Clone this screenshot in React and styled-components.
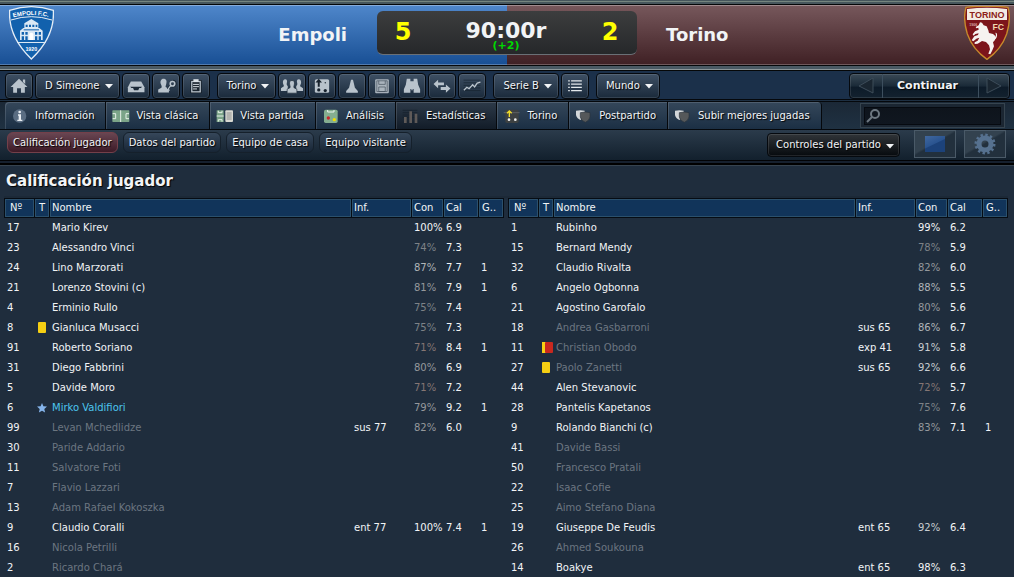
import React, { useState } from "react";
import styled, { createGlobalStyle, css } from "styled-components";

const GlobalStyle = createGlobalStyle`
    * {
        box-sizing: border-box;
    }
    body {
        margin: 0;
        background: #1f2d3d;
        color: #f2f4f6;
        font-family: "DejaVu Sans", sans-serif;
        font-size: 10px;
        line-height: 12px;
    }
    button,
    input {
        font: inherit;
        color: inherit;
        margin: 0;
    }
    svg {
        display: block;
    }
`;

const Page = styled.div`
    display: flex;
    flex-direction: column;
    height: 100vh;
    overflow: hidden;
`;

/* scoreboard */
const TopEdge = styled.div`
    flex: none;
    height: 5px;
    background: linear-gradient(#46565c 0 1px, #75857f 1px 2px, #46565c 2px 4px, #050708 4px);
`;
const Scoreboard = styled.header`
    flex: none;
    display: grid;
    grid-template-columns: 1fr 260px 1fr;
    height: 60px;
    background:
        linear-gradient(#ffffff50 0 1px, #ffffff00 1px 59px, #ffffff40 59px),
        linear-gradient(#4f87cb, #184f94) left / 50% 100% no-repeat,
        linear-gradient(#77585c, #3f2024) right / 50% 100% no-repeat;
`;
const Side = styled.div`
    display: flex;
    justify-content: space-between;
    padding: 1px 4px 0 9px;
    flex-direction: ${({ $away }) => ($away ? "row-reverse" : "row")};
`;
const TeamName = styled.h2`
    margin: 0;
    padding: ${({ $away }) => ($away ? "0 20px" : "0 26px")};
    font-size: 18px;
    line-height: 57px;
    font-weight: bold;
`;
const ScorePanel = styled.div`
    display: grid;
    grid-template-columns: 52px 1fr 54px;
    height: 44px;
    margin-top: 6px;
    border-radius: 6px;
    background: linear-gradient(#3c3d3e, #26282a);
    border-bottom: 1px solid #6a7076;
    text-align: center;
`;
const Goals = styled.strong`
    color: #ffff00;
    font-size: 24px;
    line-height: 42px;
`;
const Clock = styled.div`
    padding-top: 8px;
    font-size: 22px;
    line-height: 24px;
    font-weight: bold;
`;
const AddedTime = styled.div`
    margin-top: -2px;
    font-size: 11px;
    line-height: 10px;
    font-weight: bold;
    color: #00d800;
`;
const BottomEdge = styled.div`
    flex: none;
    height: 6px;
    background: linear-gradient(#07090b 0 1px, #4a5963 1px 4px, #8b9598 4px 5px, #050708 5px);
`;

/* main toolbar */
const Toolbar = styled.nav`
    flex: none;
    display: flex;
    align-items: center;
    gap: 2px;
    height: 28px;
    padding: 1px 4px 0 5px;
    background: #1b304a;
`;
const glossy = css`
    border: 1px solid #05090e;
    border-radius: 4px;
    background: linear-gradient(#3e5064, #1a2a3b);
    box-shadow: inset 0 0 0 1px #ffffff1c;
    text-shadow: 1px 1px 1px #000;
    padding: 0;
    height: 26px;
`;
const IconButton = styled.button`
    ${glossy}
    width: 28px;
    display: grid;
    place-items: center;
`;
const MenuButton = styled.button`
    ${glossy}
    display: flex;
    align-items: center;
    gap: 5px;
    padding: 0 6px 0 9px;
    margin-left: ${({ $spaced }) => ($spaced ? "5px" : "0")};
    svg {
        margin-top: 2px;
    }
`;
const Continue = styled.div`
    ${glossy}
    display: grid;
    grid-template-columns: 32px 96px 31px;
    margin-left: auto;
    background: linear-gradient(#3a4956, #1a2a38 50%, #0d1b29 55%, #13222f);
    button {
        display: grid;
        place-items: center;
        padding: 0;
        border: 0;
        background: none;
        text-shadow: inherit;
    }
    button + button {
        border-left: 1px solid #3d4f5e;
    }
`;
const ContinueLabel = styled.span`
    padding-right: 6px;
    font-size: 11px;
    font-weight: bold;
`;
const Rule = styled.div`
    flex: none;
    height: 3px;
    background: linear-gradient(#05080c 0 1px, #1d2f42 1px 2px, #05080c 2px);
`;

/* tabs */
const TabBar = styled.div`
    flex: none;
    display: flex;
    height: 28px;
    padding: 0 9px 0 5px;
    background: linear-gradient(#1b2836, #1f3142);
    border-bottom: 1px solid #05080c;
`;
const Tab = styled.button`
    display: flex;
    align-items: center;
    height: 27px;
    padding: 0 11px 0 0;
    border: 0;
    border-right: 1px solid #05080c;
    background: ${({ $active }) =>
        $active ? "linear-gradient(#2d3a49, #121c28)" : "linear-gradient(#35475a, #1b2f44)"};
    box-shadow: inset 1px 1px 0 #ffffff22;
    text-shadow: 1px 1px 1px #000;
    &:first-child {
        border-top-left-radius: 4px;
    }
    &:last-of-type {
        border-top-right-radius: 4px;
    }
    svg {
        width: 30px;
        height: 18px;
    }
`;
const Search = styled.label`
    display: flex;
    align-items: center;
    width: 145px;
    height: 25px;
    margin: 1px 0 0 auto;
    padding: 0 3px;
    border: 1px solid #36444f;
    background: #1b2632;
    position: relative;
    svg {
        position: absolute;
        left: 5px;
    }
    input {
        width: 100%;
        height: 18px;
        padding: 0 4px 0 20px;
        border: 1px solid #060a10;
        background: linear-gradient(#0e141c, #101720);
        outline: none;
    }
`;

/* sub views */
const SubBar = styled.div`
    flex: none;
    display: flex;
    align-items: flex-start;
    gap: 5px;
    height: 30px;
    padding: 0 8px 0 7px;
    background: linear-gradient(#2b3b4b, #12202d);
`;
const Pill = styled.button`
    height: 21px;
    margin-top: 2px;
    padding: 0 5px;
    border: 1px solid #15202b;
    border-radius: 6px;
    background: linear-gradient(#36475a, #182636);
    text-shadow: 1px 1px 1px #000;
    ${({ $active }) =>
        $active &&
        css`
            border-color: #74404a;
            background: linear-gradient(#694652, #3d1a27);
        `}
`;
const MatchControls = styled(MenuButton)`
    height: 24px;
    margin: 3px 9px 0 auto;
    padding: 0 5px 0 8px;
    background: linear-gradient(#303438, #060a0e);
`;
const ViewButton = styled.button`
    display: grid;
    place-items: center;
    width: 42px;
    height: 28px;
    margin-right: 3px;
    padding: 0;
    border: 1px solid #4a5a68;
    background: linear-gradient(150deg, #33424f 45%, #22303d 50%);
    &:last-child {
        margin-right: 0;
    }
`;
const PageEdge = styled.div`
    flex: none;
    height: 6px;
    background: linear-gradient(#020305 0 1px, #16202e 1px 3px, #000 3px 5px, #36434f 5px);
`;

/* ratings */
const Content = styled.main`
    flex: 1;
    min-height: 0;
    overflow: hidden;
    padding: 0 6px 0 4px;
`;
const Title = styled.h1`
    margin: 0;
    padding: 0 2px;
    font-size: 15px;
    line-height: 30px;
    border-bottom: 2px solid #1c2937;
    text-shadow: 1px 1px 1px #000;
`;
const Tables = styled.div`
    display: grid;
    grid-template-columns: 1fr 1fr;
    gap: 4px;
`;
const RatingTable = styled.table`
    width: 100%;
    table-layout: fixed;
    border-spacing: 0;
    th,
    td {
        height: 20px;
        padding: 0 0 0 3px;
        text-align: left;
        white-space: nowrap;
        font-weight: normal;
    }
    th {
        padding-left: 2px;
        border: 1px solid #060c14;
        border-right: 0;
        background: #11345a;
        box-shadow: inset 0 0 0 1px #2b506c;
    }
    th:first-child {
        padding-left: 5px;
    }
    th:nth-child(2) {
        padding-left: 4px;
    }
    th:last-child {
        padding-left: 3px;
        border-right: 1px solid #060c14;
    }
`;
const Col = styled.col`
    width: ${({ $w }) => $w};
`;
const NameCell = styled.td`
    color: ${({ $tone }) => ({ off: "#6c7681", best: "#4cc5ee" })[$tone] || "inherit"};
`;
const ConditionCell = styled.td`
    color: ${({ $value }) => {
        if (!$value || $value >= 98) return "#f2f4f6";
        if ($value >= 90) return "#c8ccd0";
        if ($value >= 85) return "#b0b4b8";
        if ($value >= 79) return "#95989c";
        if ($value >= 74) return "#7d8287";
        return "#857674";
    }};
`;

const Arrow = () => (
    <svg width="8" height="5" viewBox="0 0 8 5" aria-hidden="true">
        <path d="M0 0h8L4 4.6Z" fill="#f2f4f6" />
    </svg>
);

const steel = "#b9c3cc";
const dark = "#1c2a38";

const toolIcons = {
    home: (
        <g fill={steel}>
            <path d="M40 8 L66 33 H58 V51 H46 V37 H34 V51 H22 V33 H14Z" />
            <path d="M52 10h7v14l-7-6z" />
        </g>
    ),
    inbox: (
        <g>
            <path d="M24 16H56L66 34V49H15V34Z" fill={steel} />
            <path d="M22 32H59L55 36H50L47 43H34L31 36H26Z" fill={dark} />
        </g>
    ),
    scout: (
        <g fill={steel}>
            <path d="M32 8c9 0 11 7 9 14-1 6-3 8-2 11l10 6v11H16v-9l10-6c2-3 0-6-2-11-3-8 1-16 8-16Z" />
            <path d="M62 15a8 8 0 1 1-7 13L46 41" fill="none" stroke={dark} strokeWidth="8" />
            <circle cx="60" cy="23" r="7" fill="none" stroke={steel} strokeWidth="5" />
            <path d="M55 28 L42 46 m4-6 5 4" fill="none" stroke={steel} strokeWidth="4" />
        </g>
    ),
    clipboard: (
        <g>
            <path d="M23 12h34v40H23z" fill="#0f161d" />
            <path d="M25 14h30v36H25z" fill={steel} />
            <path d="M29 18h22v28H29z" fill="#1b252f" />
            <path d="M32 9h16v9H32z" fill="#d9dfe4" />
            <path d="M31 25h18M31 32h18M31 39h12" stroke="#d9dfe4" strokeWidth="3" />
        </g>
    ),
    people: (
        <g fill={steel}>
            <path d="M19 9c6 0 7 6 5 12-1 4 0 7 3 9v15H6v-8l9-6c1-3-3-6-3-12 0-6 2-10 7-10Z" />
            <path d="M61 9c-6 0-7 6-5 12 1 4 0 7-3 9v15h21v-8l-9-6c-1-3 3-6 3-12 0-6-2-10-7-10Z" />
            <path
                d="M40 13c7 0 9 6 7 13-1 5-2 6-1 9l9 5v12H25V40l9-5c1-3 0-4-1-9-2-7 0-13 7-13Z"
                stroke={dark}
                strokeWidth="2"
            />
        </g>
    ),
    tactics: (
        <g>
            <rect x="18" y="9" width="44" height="42" rx="5" fill={steel} />
            <path d="M30 8 40 19H33V32H27V19H20Z" fill="#17222d" />
            <g fill="#17222d">
                <circle cx="30" cy="42" r="5" />
                <circle cx="50" cy="44" r="5" />
                <circle cx="50" cy="20" r="2" />
            </g>
        </g>
    ),
    training: <path d="M37 11h6l6 24 9 10v6H22v-6l9-10Z" fill={steel} />,
    save: (
        <g>
            <rect x="19" y="9" width="42" height="43" rx="3" fill="#aab4bd" />
            <path
                d="M24 14h32v33H24ZM30 33h20v14H30ZM30 14v11h20V14"
                fill="none"
                stroke="#3f4c58"
                strokeWidth="2"
            />
        </g>
    ),
    binoculars: (
        <path
            d="M24 8h11v7h10V8h11l3 18 6 14v11H45V39h-3v4h-4v-4h-3v12H15V40l6-14Z"
            fill={steel}
        />
    ),
    transfers: (
        <g fill={steel}>
            <path d="M14 24 28 11v8h18v9H28v9Z" />
            <path d="M66 38 52 25v8H36v9h16v9Z" />
        </g>
    ),
    chart: (
        <g fill="none">
            <path d="M14 12h52M14 20h52M14 28h52M14 36h52M14 44h52" stroke="#16232f" strokeWidth="2" />
            <path d="M15 43 24 34 31 38 42 26 48 33 56 21 66 18" stroke={steel} strokeWidth="4" />
        </g>
    ),
    list: (
        <g stroke="#e3e8ec" strokeWidth="4">
            <path d="M19 14h5M19 24h5M19 34h5M19 44h5M28 14h33M28 24h33M28 34h33M28 44h33" />
        </g>
    ),
};

const ToolIcon = ({ name }) => (
    <svg width="26" height="20" viewBox="0 0 80 60" aria-hidden="true">
        {toolIcons[name]}
    </svg>
);

// each drawing sits in the 30px slot left of the tab label
const shields = (
    <g>
        <path d="M21 11q13-3 26 0v13q-2 10-13 15-11-5-13-15Z" fill="#d3d7da" />
        <path
            d="M34 17q15-4 29 0v13q-2 11-14 16-13-5-15-16Z"
            fill="#55585a"
            stroke="#2a333c"
            strokeWidth="2"
        />
    </g>
);
const tabIcons = {
    info: (
        <g>
            <circle cx="44" cy="27" r="20" fill="#5a6d82" />
            <g fill="#e8edf2">
                <circle cx="44" cy="15" r="4" />
                <path d="M39 22h9v16h4v4H37v-4h4V26h-2Z" />
            </g>
        </g>
    ),
    classic: (
        <g>
            <rect x="19" y="10" width="51" height="35" rx="2" fill="#7ba488" />
            <path
                d="M44 10v35M20 20h9v15h-9M69 20h-9v15h9"
                fill="none"
                stroke="#e6f0e8"
                strokeWidth="3"
            />
        </g>
    ),
    match: (
        <g>
            <rect x="20" y="10" width="21" height="35" fill="#7ba488" />
            <path d="M20 27h21M25 11v6h11v-6M25 44v-6h11v6" fill="none" stroke="#e6f0e8" strokeWidth="3" />
            <rect x="46" y="10" width="23" height="35" rx="3" fill="#d8d8d2" />
            <path d="M50 18h15M50 24h15M50 30h15M50 36h15" stroke="#6a6d6e" strokeWidth="2" />
        </g>
    ),
    analysis: (
        <g>
            <rect x="24" y="8" width="41" height="40" rx="5" fill="#85ae90" />
            <path d="M35 9v6h19V9" fill="none" stroke="#eaf3ec" strokeWidth="3" />
            <circle cx="37" cy="33" r="5" fill="#c8262c" />
            <circle cx="55" cy="38" r="5" fill="#f0dc00" />
        </g>
    ),
    stats: (
        <g>
            <path d="M20 10h44M20 17h44M20 24h44M20 31h44" stroke="#15202b" strokeWidth="2" />
            <path d="M24 30h8v18h-8zM40 13h8v35h-8zM56 20h8v28h-8z" fill="#5f5a58" />
        </g>
    ),
    tactics: (
        <g>
            <rect x="25" y="8" width="40" height="40" rx="5" fill="#3d4142" />
            <path d="M20 17h48" stroke="#6c7074" strokeWidth="2" />
            <path d="M37 30V14m-7 5 7-7 7 7" fill="none" stroke="#f0dc28" strokeWidth="4" />
            <g fill="#f0f2f4">
                <circle cx="36" cy="38" r="4" />
                <circle cx="55" cy="38" r="4" />
            </g>
        </g>
    ),
    post: shields,
    upload: shields,
};

const EmpoliCrest = () => (
    <svg width="45" height="54" viewBox="0 0 135 162" role="img" aria-label="Empoli F.C.">
        <path
            d="M2 13Q67-9 133 13Q138 92 67 159Q-3 92 2 13Z"
            fill="#1261ad"
            stroke="#e4edf6"
            strokeWidth="4"
        />
        <path d="M6 42Q67 22 129 42" fill="none" stroke="#e4edf6" strokeWidth="3" />
        <path id="empoliArc" d="M13 34Q67 20 125 34" fill="none" />
        <text fill="#fff" fontFamily="Liberation Sans, sans-serif" fontSize="18" fontWeight="bold">
            <textPath href="#empoliArc">EMPOLI F.C.</textPath>
        </text>
        <g fill="#dbe8f4">
            <path d="M67 39l21 13v15H46V52Z" />
            <path d="M33 74l10-8h48l10 8v28H33Z" />
            <path d="M24 108h86v3H24z" />
        </g>
        <g fill="#1261ad">
            <path d="M50 56h6v7h-6zM60 56h6v7h-6zM70 56h6v7h-6zM80 56h5v7h-5z" />
            <path d="M44 70h46v3H44z" />
            <path d="M38 78h7v8h-7zM49 78h7v8h-7zM78 78h7v8h-7zM89 78h7v8h-7z" />
            <path d="M38 91h7v11h-7zM49 91h7v11h-7zM78 91h7v11h-7zM89 91h7v11h-7z" />
        </g>
        <path d="M61 84q6-7 12 0v18H61z" fill="#fff" />
        <text
            x="67"
            y="134"
            textAnchor="middle"
            fill="#fff"
            fontFamily="Liberation Sans, sans-serif"
            fontSize="16"
            fontWeight="bold"
        >
            1920
        </text>
    </svg>
);

const TorinoCrest = () => (
    <svg width="46" height="54" viewBox="0 0 138 162" role="img" aria-label="Torino FC">
        <path
            d="M6 4Q36 0 69 1Q102 0 132 4Q142 38 128 84Q112 130 69 160Q26 130 10 84Q-4 38 6 4Z"
            fill="#7c151b"
            stroke="#c88a2c"
            strokeWidth="4"
        />
        <path d="M9 9Q69 2 129 9V42H9Z" fill="#f3ece4" />
        <g fontFamily="Liberation Sans, sans-serif" fontWeight="bold" textAnchor="middle">
            <text x="69" y="36" fontSize="27" fill="#8c2018">
                TORINO
            </text>
            <text x="103" y="71" fontSize="26" fill="#f0d9b0">
                FC
            </text>
            <text x="28" y="61" fontSize="11" fill="#d8a8a4">
                1906
            </text>
        </g>
        <path
            d="M54 50l5 8 9 3 5 12 2 8 12 3 7 6-1 12-6 7 3 12-5 12-6 12-6-2 5-13-3-12-9-10-12-3-13 8-9 1 0-5 9-5 5-9-9 3-9 8-5-3 8-12 11-4 2-5-10 2-5 5-3-4 7-9 11-5-1-6-6 2-2-4 9-5 4-9Z"
            fill="#f6f2f0"
        />
        <path d="M90 96q9-6 4-16 8 0 4 14-3 8-8 8Z" fill="#f6f2f0" />
    </svg>
);

const YellowCard = () => (
    <svg width="10" height="12" viewBox="0 0 10 12" role="img" aria-label="Amarilla">
        <rect x="1" y="0" width="8" height="11" rx="1" fill="#f6cf13" />
    </svg>
);
const SecondYellow = () => (
    <svg width="12" height="12" viewBox="0 0 12 12" role="img" aria-label="Expulsado">
        <rect x="1" y="0" width="4" height="11" fill="#f6cf13" />
        <rect x="4" y="0" width="8" height="11" rx="1" fill="#c9281f" />
    </svg>
);
const Star = () => (
    <svg width="10" height="12" viewBox="0 0 10 12" role="img" aria-label="Mejor jugador">
        <path d="M5 1l1.4 3.3 3.6.3-2.7 2.4.8 3.6L5 8.7 1.9 10.6l.8-3.6L0 4.6l3.6-.3Z" fill="#85b4ea" />
    </svg>
);
const marks = { yellow: <YellowCard />, second: <SecondYellow />, star: <Star /> };

// [number, name, condition, rating, info, goals, name tone, mark]
const home = [
    [17, "Mario Kirev", 100, "6.9"],
    [23, "Alessandro Vinci", 74, "7.3"],
    [24, "Lino Marzorati", 87, "7.7", "", 1],
    [21, "Lorenzo Stovini (c)", 81, "7.9", "", 1],
    [4, "Erminio Rullo", 75, "7.4"],
    [8, "Gianluca Musacci", 75, "7.3", "", "", "", "yellow"],
    [91, "Roberto Soriano", 71, "8.4", "", 1],
    [31, "Diego Fabbrini", 80, "6.9"],
    [5, "Davide Moro", 71, "7.2"],
    [6, "Mirko Valdifiori", 79, "9.2", "", 1, "best", "star"],
    [99, "Levan Mchedlidze", 82, "6.0", "sus 77", "", "off"],
    [30, "Paride Addario", null, "", "", "", "off"],
    [11, "Salvatore Foti", null, "", "", "", "off"],
    [7, "Flavio Lazzari", null, "", "", "", "off"],
    [13, "Adam Rafael Kokoszka", null, "", "", "", "off"],
    [9, "Claudio Coralli", 100, "7.4", "ent 77", 1],
    [16, "Nicola Petrilli", null, "", "", "", "off"],
    [2, "Ricardo Chará", null, "", "", "", "off"],
];
const away = [
    [1, "Rubinho", 99, "6.2"],
    [15, "Bernard Mendy", 78, "5.9"],
    [32, "Claudio Rivalta", 82, "6.0"],
    [6, "Angelo Ogbonna", 88, "5.5"],
    [21, "Agostino Garofalo", 80, "5.6"],
    [18, "Andrea Gasbarroni", 86, "6.7", "sus 65", "", "off"],
    [11, "Christian Obodo", 91, "5.8", "exp 41", "", "off", "second"],
    [27, "Paolo Zanetti", 92, "6.6", "sus 65", "", "off", "yellow"],
    [44, "Alen Stevanovic", 72, "5.7"],
    [28, "Pantelis Kapetanos", 75, "7.6"],
    [9, "Rolando Bianchi (c)", 83, "7.1", "", 1],
    [41, "Davide Bassi", null, "", "", "", "off"],
    [50, "Francesco Pratali", null, "", "", "", "off"],
    [22, "Isaac Cofie", null, "", "", "", "off"],
    [25, "Aimo Stefano Diana", null, "", "", "", "off"],
    [19, "Giuseppe De Feudis", 92, "6.4", "ent 65"],
    [26, "Ahmed Soukouna", null, "", "", "", "off"],
    [14, "Boakye", 98, "6.3", "ent 65"],
];

const tabs = [
    ["info", "Información"],
    ["classic", "Vista clásica"],
    ["match", "Vista partida"],
    ["analysis", "Análisis"],
    ["stats", "Estadísticas"],
    ["tactics", "Torino"],
    ["post", "Postpartido"],
    ["upload", "Subir mejores jugadas"],
];
const views = ["Calificación jugador", "Datos del partido", "Equipo de casa", "Equipo visitante"];

const Menu = ({ label, spaced }) => (
    <MenuButton $spaced={spaced} aria-haspopup="menu">
        {label}
        <Arrow />
    </MenuButton>
);
const Tool = ({ name, label }) => (
    <IconButton aria-label={label}>
        <ToolIcon name={name} />
    </IconButton>
);

const Ratings = ({ team, players }) => (
    <RatingTable aria-label={team}>
        <colgroup>
            {["30px", "15px", "auto", "60px", "32px", "35px", "26px"].map((w, i) => (
                <Col key={i} $w={w} />
            ))}
        </colgroup>
        <thead>
            <tr>
                {["Nº", "T", "Nombre", "Inf.", "Con", "Cal", "G.."].map((head) => (
                    <th key={head}>{head}</th>
                ))}
            </tr>
        </thead>
        <tbody>
            {players.map(([number, name, condition, rating, info, goals, tone, mark]) => (
                <tr key={name}>
                    <td>{number}</td>
                    <td>{marks[mark]}</td>
                    <NameCell $tone={tone}>{name}</NameCell>
                    <td>{info}</td>
                    <ConditionCell $value={condition}>{condition && `${condition}%`}</ConditionCell>
                    <td>{rating}</td>
                    <td>{goals}</td>
                </tr>
            ))}
        </tbody>
    </RatingTable>
);

const App = () => {
    const [tab, setTab] = useState("stats");
    const [view, setView] = useState(views[0]);

    return (
        <Page>
            <GlobalStyle />
            <TopEdge />
            <Scoreboard>
                <Side>
                    <EmpoliCrest />
                    <TeamName>Empoli</TeamName>
                </Side>
                <ScorePanel>
                    <Goals>5</Goals>
                    <div>
                        <Clock>90:00r</Clock>
                        <AddedTime>(+2)</AddedTime>
                    </div>
                    <Goals>2</Goals>
                </ScorePanel>
                <Side $away>
                    <TorinoCrest />
                    <TeamName $away>Torino</TeamName>
                </Side>
            </Scoreboard>
            <BottomEdge />
            <Toolbar>
                <Tool name="home" label="Inicio" />
                <Menu label="D Simeone" />
                <Tool name="inbox" label="Bandeja" />
                <Tool name="scout" label="Ojeador" />
                <Tool name="clipboard" label="Notas" />
                <Menu label="Torino" spaced />
                <Tool name="people" label="Plantilla" />
                <Tool name="tactics" label="Tácticas" />
                <Tool name="training" label="Entrenamiento" />
                <Tool name="save" label="Guardar" />
                <Tool name="binoculars" label="Ojear" />
                <Tool name="transfers" label="Traspasos" />
                <Tool name="chart" label="Finanzas" />
                <Menu label="Serie B" spaced />
                <Tool name="list" label="Lista" />
                <Menu label="Mundo" spaced />
                <Continue>
                    <button aria-label="Atrás">
                        <svg width="16" height="18" viewBox="0 0 16 18" aria-hidden="true">
                            <path d="M15 1v15L1 9Z" fill="#1a2631" stroke="#3d4c59" />
                        </svg>
                    </button>
                    <button>
                        <ContinueLabel>Continuar</ContinueLabel>
                    </button>
                    <button aria-label="Adelante">
                        <svg width="16" height="18" viewBox="0 0 16 18" aria-hidden="true">
                            <path d="M1 1v15L15 9Z" fill="#1a2631" stroke="#3d4c59" />
                        </svg>
                    </button>
                </Continue>
            </Toolbar>
            <Rule />
            <TabBar>
                {tabs.map(([id, label]) => (
                    <Tab key={id} $active={id === tab} onClick={() => setTab(id)}>
                        <svg viewBox="0 0 90 54" aria-hidden="true">
                            {tabIcons[id]}
                        </svg>
                        {label}
                    </Tab>
                ))}
                <Search>
                    <svg width="15" height="14" viewBox="0 0 15 14" aria-hidden="true">
                        <circle cx="9" cy="5" r="4" fill="none" stroke="#6d7780" strokeWidth="2" />
                        <path d="M6 8 1 13" stroke="#6d7780" strokeWidth="2" />
                    </svg>
                    <input type="text" aria-label="Buscar" />
                </Search>
            </TabBar>
            <SubBar>
                {views.map((label) => (
                    <Pill key={label} $active={label === view} onClick={() => setView(label)}>
                        {label}
                    </Pill>
                ))}
                <MatchControls aria-haspopup="menu">
                    Controles del partido
                    <Arrow />
                </MatchControls>
                <ViewButton aria-label="Pantalla">
                    <svg width="22" height="18" viewBox="0 0 22 18" aria-hidden="true">
                        <linearGradient id="screen" x1="0" y1="0" x2="0.6" y2="1">
                            <stop offset="0" stopColor="#41689f" />
                            <stop offset="0.55" stopColor="#2a5490" />
                            <stop offset="0.6" stopColor="#1c427a" />
                        </linearGradient>
                        <rect x="1" y="1" width="20" height="16" fill="url(#screen)" />
                    </svg>
                </ViewButton>
                <ViewButton aria-label="Opciones">
                    <svg width="22" height="22" viewBox="-11 -11 22 22" aria-hidden="true">
                        <circle r="6" fill="none" stroke="#56718f" strokeWidth="5" />
                        <circle r="9" fill="none" stroke="#56718f" strokeWidth="3" strokeDasharray="2.356 2.356" />
                    </svg>
                </ViewButton>
            </SubBar>
            <PageEdge />
            <Content>
                <Title>{view}</Title>
                <Tables>
                    <Ratings team="Empoli" players={home} />
                    <Ratings team="Torino" players={away} />
                </Tables>
            </Content>
        </Page>
    );
};

export default App;
